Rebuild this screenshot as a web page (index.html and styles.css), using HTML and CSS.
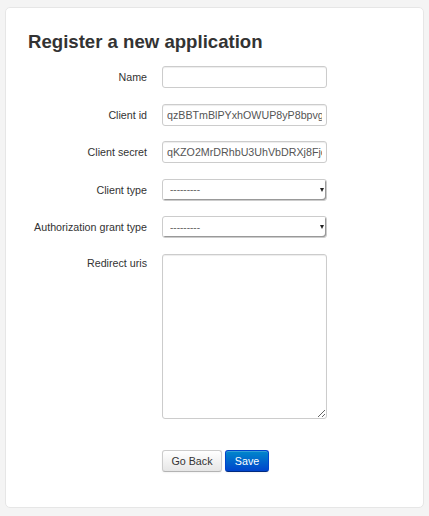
FILE: index.html
```html
<!DOCTYPE html>
<html>
<head>
<meta charset="utf-8">
<link rel="stylesheet" href="styles.css">
</head>
<body>
<div class="card">
  <h3 class="title">Register a new application</h3>
  <form class="form">
    <label class="lbl">Name</label>
    <input class="inp" type="text" value="">
    <label class="lbl">Client id</label>
    <input class="inp" type="text" value="qzBBTmBlPYxhOWUP8yP8bpvgXk2fLqS">
    <label class="lbl">Client secret</label>
    <input class="inp" type="text" value="qKZO2MrDRhbU3UhVbDRXj8FjcTz0Wq">
    <label class="lbl">Client type</label>
    <div class="sel"><select><option>---------</option></select></div>
    <label class="lbl">Authorization grant type</label>
    <div class="sel"><select><option>---------</option></select></div>
    <label class="lbl lbl-top">Redirect uris</label>
    <textarea class="area"></textarea>
    <span></span>
    <div class="actions">
      <button type="button" class="btn">Go Back</button>
      <button type="button" class="btn btn-primary">Save</button>
    </div>
  </form>
</div>
</body>
</html>
```

FILE: styles.css
```css
html, body {
  margin: 0;
  padding: 0;
}
body {
  background: #f4f4f4;
  font-family: "Liberation Sans", Arial, sans-serif;
  font-size: 10.7px;
  color: #333;
  padding: 7px 5px 8px 5px;
}
.card {
  background: #fff;
  border: 1px solid #e6e6e6;
  border-radius: 5px;
  box-sizing: border-box;
  height: 501px;
  padding: 22px 0 0 0;
}
.title {
  margin: 0 0 12px 22px;
  font-size: 18.6px;
  line-height: 24px;
  font-weight: bold;
  color: #333;
}
.form {
  display: grid;
  grid-template-columns: 141px 165px;
  column-gap: 15px;
  row-gap: 15.6px;
  align-items: center;
}
.lbl {
  text-align: right;
  font-size: 10.7px;
  color: #333;
}
.lbl-top {
  align-self: start;
  padding-top: 3px;
}
.inp {
  box-sizing: border-box;
  width: 165px;
  height: 22px;
  margin: 0;
  padding: 2px 4px;
  border: 1px solid #ccc;
  border-radius: 3px;
  box-shadow: inset 0 1px 1px rgba(0,0,0,0.075);
  font-family: "Liberation Sans", Arial, sans-serif;
  font-size: 10.7px;
  color: #555;
  background: #fff;
}
.sel {
  position: relative;
  width: 165px;
  height: 22px;
}
.sel select {
  -webkit-appearance: none;
  appearance: none;
  box-sizing: border-box;
  width: 165px;
  height: 22px;
  margin: 0;
  padding: 0 7px;
  border: 1px solid #ccc;
  border-radius: 3px;
  background: #fff;
  font-family: "Liberation Sans", Arial, sans-serif;
  font-size: 10px;
  color: #666;
  box-shadow: inset -2px -2px 0 -1px #999;
}
.sel::after {
  content: "";
  position: absolute;
  right: 3px;
  top: 9px;
  border-left: 2.5px solid transparent;
  border-right: 2.5px solid transparent;
  border-top: 4px solid #222;
}
.area {
  box-sizing: border-box;
  width: 165px;
  height: 165px;
  margin: 0;
  border: 1px solid #ccc;
  border-radius: 3px;
  box-shadow: inset 0 1px 1px rgba(0,0,0,0.075);
  background: #fff;
}
.actions {
  display: flex;
  gap: 3px;
  margin-top: 15px;
}
.btn {
  box-sizing: border-box;
  height: 22px;
  width: 60px;
  margin: 0;
  padding: 0;
  border: 1px solid #ccc;
  border-bottom-color: #b3b3b3;
  border-radius: 3px;
  background: linear-gradient(#fff, #e6e6e6);
  font-family: "Liberation Sans", Arial, sans-serif;
  font-size: 10.7px;
  color: #333;
  box-shadow: inset 0 1px 0 rgba(255,255,255,0.2), 0 1px 2px rgba(0,0,0,0.05);
}
.btn-primary {
  width: 44px;
  color: #fff;
  border-color: #0044cc #0044cc #002a80;
  background: linear-gradient(#0088cc, #0044cc);
}
```
